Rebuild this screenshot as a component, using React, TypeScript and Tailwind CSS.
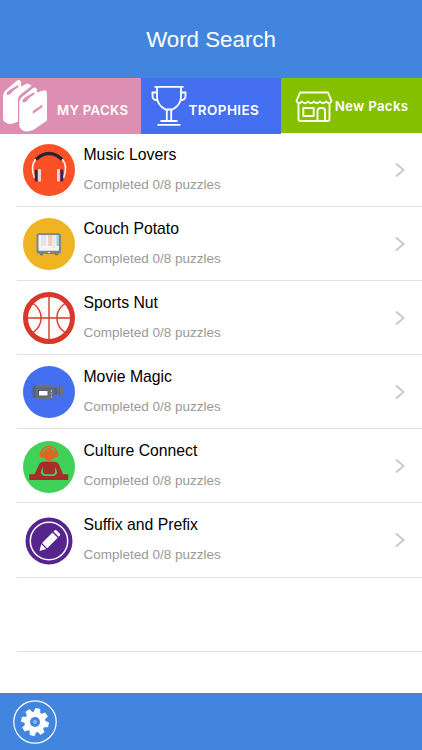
import React from "react";

const MusicIcon = () => (
  <svg viewBox="0 0 52 52" className="size-[52px]">
    <circle cx="26" cy="26" r="26" fill="#fb5127" />
    <path d="M11.500 34C5 17 16 9.500 26 9.500S47 17 40.500 34" fill="none" stroke="#fff3ee" strokeWidth="1.700" />
    <path d="M13 15.500Q19 9.500 26 9.500T39 15.500" fill="none" stroke="#29242f" strokeWidth="3.600" />
    <rect x="11.800" y="25.500" width="3" height="12" rx="1.200" fill="#34243d" />
    <rect x="14.800" y="25" width="3.200" height="12.500" rx="1.200" fill="#ead5d7" />
    <rect x="34" y="25" width="3.200" height="12.500" rx="1.200" fill="#ead5d7" />
    <rect x="37.200" y="25.500" width="3" height="12" rx="1.200" fill="#34243d" />
    <path d="M14.600 26v11M37.400 26v11" stroke="#ad3657" strokeWidth=".8" />
  </svg>
);

const TvIcon = () => (
  <svg viewBox="0 0 52 52" className="size-[52px]">
    <circle cx="26" cy="26" r="26" fill="#eeb424" />
    <path d="M17 35h18v2.200H32V36H20v1.200h-3z" fill="#687078" />
    <rect x="13.500" y="15.300" width="24.500" height="20.500" rx="2.500" fill="#7d858b" />
    <rect x="15.500" y="17" width="20.500" height="15.800" rx="1" fill="#f6f3f2" />
    <path d="M18 17h5v11h-5z" fill="#e3e2f0" />
    <path d="M25 17h4v11h-4z" fill="#f4cdbb" />
    <path d="M29 17h3.500v13H29z" fill="#e9e8ec" />
    <path d="M33.500 17h2.500v11h-2.500z" fill="#9fd0c7" />
    <circle cx="26" cy="34.500" r=".8" fill="#fff" />
  </svg>
);

const BallIcon = () => (
  <svg viewBox="0 0 52 52" className="size-[52px]">
    <circle cx="26" cy="26" r="23.500" fill="#fffafa" stroke="#d8382b" strokeWidth="5" />
    <path d="M26 4v44M4 26h44M9.500 11C21 19 21 33 9.500 41M42.500 11C31 19 31 33 42.500 41" fill="none" stroke="#d8382b" strokeWidth="1.400" />
  </svg>
);

const CameraIcon = () => (
  <svg viewBox="0 0 52 52" className="size-[52px]">
    <circle cx="26" cy="26" r="26" fill="#436ff0" />
    <path d="M9.500 20.500 13 19v13l-3.500-1z" fill="#536385" />
    <path d="M13 18.800h17.500v2.700H35l5.500-2.300v12L35 28.500h-4v4.700H13z" fill="#697080" />
    <path d="M13 22.700h18" stroke="#555f75" strokeWidth="1" />
    <path d="M31 22h3v6h-3zM36.500 20.700v9" stroke="#525f7b" strokeWidth=".8" fill="#596580" />
    <rect x="14.800" y="24" width="10.500" height="6.500" fill="#555e70" />
    <rect x="16" y="25" width="8.500" height="4.500" fill="#fff" />
    <circle cx="28.500" cy="25" r=".7" fill="#e6ddbb" />
    <circle cx="28.500" cy="28" r=".7" fill="#e8b75d" />
    <circle cx="28.500" cy="31" r=".7" fill="#b9c5d8" />
  </svg>
);

const DjIcon = () => (
  <svg viewBox="0 0 52 52" className="size-[52px]">
    <circle cx="26" cy="26" r="26" fill="#3fd158" />
    <path d="M17.800 14C17.800 2.500 34.200 2.500 34.200 14" fill="none" stroke="#d96923" strokeWidth="1.500" />
    <ellipse cx="26" cy="13.500" rx="6" ry="6.500" fill="#d96923" />
    <path d="M19 10.500h2v6h-2q-2.500-.5-2.500-3t2.500-3M33 10.500h-2v6h2q2.500-.5 2.500-3t-2.500-3" fill="#d96923" />
    <path d="M21 20.700h10q4 0 5.500 4l3.500 8.500h5.200v5.800H6.300v-5.800h5.200l4-8.500q1.500-4 5.500-4" fill="#a92c2c" />
    <path d="m19.500 25.500-1.800 6.500 3 3h10.600l3-3-1.800-6.500-.7 6.500-1.800 1.300h-8L20.200 32z" fill="#3fd158" />
  </svg>
);

const PencilIcon = () => (
  <svg viewBox="0 0 52 52" className="size-[52px]">
    <circle cx="26" cy="26" r="23.500" fill="#55248d" />
    <circle cx="26" cy="26" r="18.700" fill="none" stroke="#fff" strokeWidth="1.500" />
    <path d="m29.500 17.500 5.200 5.200-10.500 10.500-5.200-5.200zM30.500 16.500l1.300-1.200q.8-.7 1.600 0l3.500 3.500q.7.800 0 1.600l-1.200 1.300zM18.200 29l5 5-6.700 2z" fill="#fff" />
  </svg>
);

const BooksIcon = () => (
  <svg viewBox="0 0 48 56" className="h-[56px] w-[48px] shrink-0">
    <path d="M3 19Q3 14.500 6 12L16.500 3Q20 .8 21 4V8.500L27 5.500Q30 5.500 31.500 8L20.500 16.500Q18 18.500 18 22V43.500Q10 48 5 44Q3 43 3 40Z" fill="#fff" />
    <path d="M7 17Q5.500 15 9 12.500L17.500 7.300Q19.500 7.500 17.800 9.500L13 13Q10 17.500 7 17Z" fill="#dc8fb2" />
    <path d="M19.300 26Q19 21.500 22 19L32.500 10.500Q36 8 37 11.500V14.500L43.500 12.500Q46.500 11.500 47 14.500V42.500L34 51.500Q25 56 20.500 50.500Q19.300 49 19.300 46Z" fill="#fff" />
    <path d="M23 24.500Q21.500 22 25 19.500L33.500 14.500Q35.500 14.500 34 16.500L29 20Q26 25 23 24.500Z" fill="#dc8fb2" />
    <path d="m32.800 33 9.500-6.500v2.800L32.800 36z" fill="#dc8fb2" />
  </svg>
);

const TrophyIcon = () => (
  <svg viewBox="0 0 36 42" className="mt-[7px] ml-[10px] h-[42px] w-[36px] shrink-0" fill="none" stroke="#fff" strokeWidth="1.800">
    <path d="M3.500 1.800h29M6 2v10c0 6 4 10 8.500 12.500h7C26 22 30 18 30 12V2M6 7.500H1.500V11q0 4 5 4.300M30 7.500h4.500V11q0 4-5 4.300M15.800 25v10.500M20.200 25v10.500M9.500 36h17M6.500 39.800h23" />
  </svg>
);

const ShopIcon = () => (
  <svg viewBox="0 0 38 32" className="mt-[13px] ml-[14px] h-[32px] w-[38px] shrink-0" fill="none" stroke="#faffef" strokeWidth="1.900" strokeLinejoin="round">
    <path d="M5 1.500h28l3.500 8.500q-1.500 4-5.500.5-3 3.500-6 0-3 3.500-6 0-3 3.500-6 0-3 3.500-6 0Q3 14 1.500 10zM3.500 12v16q0 2 2 2h27q2 0 2-2V12M8.300 17h10.400v8H8.300zM22.500 30V20q0-3 3-3h1.500q3 0 3 3v10" />
  </svg>
);

const GearIcon = () => (
  <svg viewBox="0 0 44 44" className="size-[44px]">
    <circle cx="22" cy="22" r="21.200" fill="none" stroke="#fff" strokeWidth="1.200" />
    <g transform="rotate(12 22 22)" fill="#fff">
      <circle cx="22" cy="22" r="10.500" />
      {[0, 45, 90, 135, 180, 225, 270, 315].map((angle) => (
        <path key={angle} transform={`rotate(${angle} 22 22)`} d="m19 13 .8-4.500h4.400l.8 4.500z" stroke="#fff" strokeWidth=".6" strokeLinejoin="round" />
      ))}
    </g>
    <circle cx="22" cy="22" r="5" fill="#4285de" />
    <circle cx="22" cy="22" r="1.500" fill="#75a7e9" stroke="#b9d6fa" strokeWidth=".7" />
  </svg>
);

const packs = [
  { name: "Music Lovers", Icon: MusicIcon },
  { name: "Couch Potato", Icon: TvIcon },
  { name: "Sports Nut", Icon: BallIcon },
  { name: "Movie Magic", Icon: CameraIcon },
  { name: "Culture Connect", Icon: DjIcon },
  { name: "Suffix and Prefix", Icon: PencilIcon },
];

export default function App() {
  return (
    <div className="flex h-[750px] w-[422px] flex-col overflow-hidden bg-white font-['Liberation_Sans',Arial,sans-serif]">
      <header className="flex h-[78px] shrink-0 items-center justify-center bg-[#4285de] pt-px">
        <h1 className="text-[22.300px] leading-[26px] text-white">Word Search</h1>
      </header>
      <nav className="flex h-[54.700px] shrink-0 items-start font-['Inter',sans-serif] text-white">
        <button className="flex h-[56px] w-[141px] shrink-0 items-start bg-[#dc8fb2]">
          <BooksIcon />
          <span className="ml-[9px] mt-[22px] whitespace-nowrap text-[13.200px] leading-5 font-semibold tracking-[0.300px]">MY PACKS</span>
        </button>
        <button className="flex h-[56px] w-[140px] shrink-0 items-start bg-[#436ff0]">
          <TrophyIcon />
          <span className="ml-[1.500px] mt-[22px] whitespace-nowrap text-[13.500px] leading-5 font-semibold tracking-[0.400px]">TROPHIES</span>
        </button>
        <button className="flex h-[55px] w-[141px] shrink-0 items-start bg-[#84c000]">
          <ShopIcon />
          <span className="ml-[1.700px] mt-[18px] whitespace-nowrap text-[13.300px] leading-5 font-semibold tracking-[0.300px]">New Packs</span>
        </button>
      </nav>
      <main className="flex-1">
        {packs.map(({ name, Icon }) => (
          <div key={name} className="flex h-[74.150px] pl-[17px]">
            <div className="flex flex-1 border-b border-[#e1e1e2] pl-[6px]">
              <div className="mt-[11.300px] h-[52px] w-[52px]"><Icon /></div>
              <div className="ml-[8.500px] flex-1 pt-[13px]">
                <h2 className="text-[15.750px] leading-[18px] text-black">{name}</h2>
                <p className="mt-[13px] text-[13.500px] leading-4 text-[#999]">Completed 0/8 puzzles</p>
              </div>
              <svg viewBox="0 0 10 16" className="mt-[29px] mr-[17px] h-4 w-[10px]" fill="none" stroke="#c7c7cc" strokeWidth="1.800">
                <path d="m1 1.500 7.500 6.500L1 14.500" />
              </svg>
            </div>
          </div>
        ))}
        <div className="ml-[17px] h-[74.150px] border-b border-[#e1e1e2]" />
      </main>
      <footer className="h-[57px] shrink-0 bg-[#4285de] pt-[6.500px] pl-[13px]">
        <button aria-label="Settings"><GearIcon /></button>
      </footer>
    </div>
  );
}
